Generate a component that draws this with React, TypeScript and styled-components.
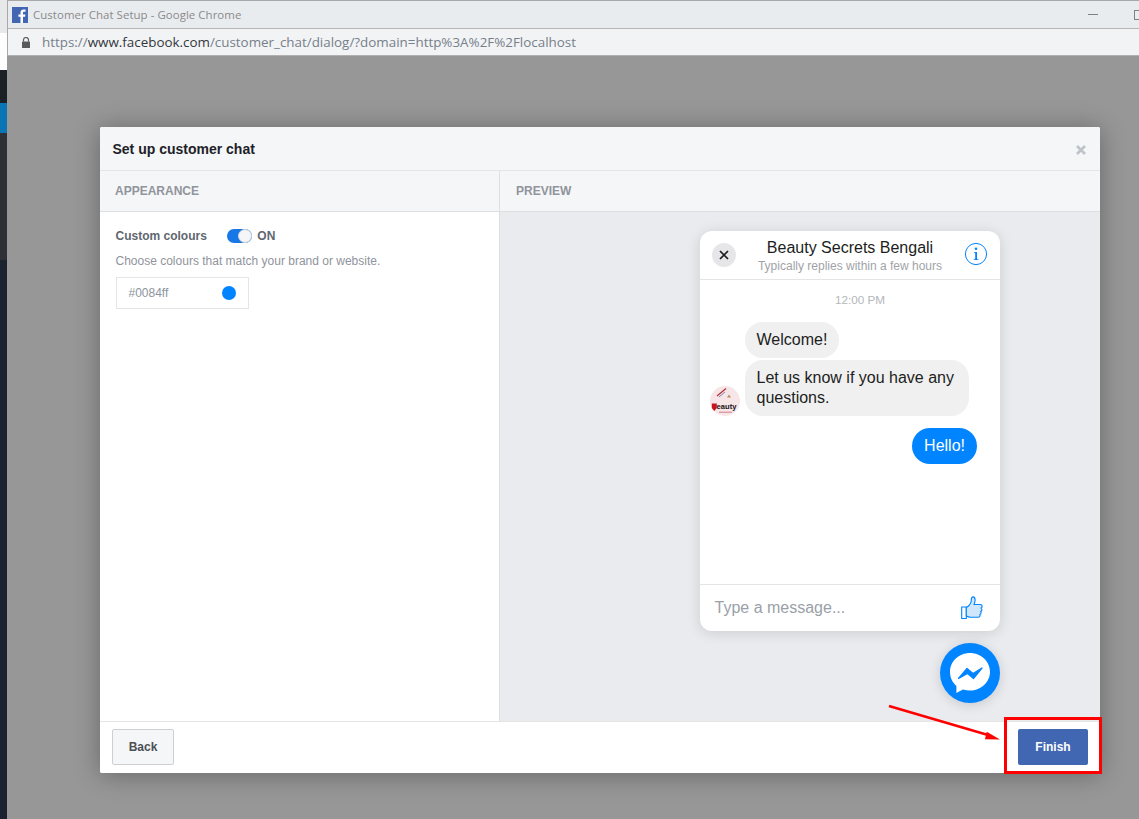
import React from "react";
import styled, { createGlobalStyle } from "styled-components";

const Global = createGlobalStyle`
  html, body { margin: 0; padding: 0; height: 100%; overflow: hidden; background: #979797; }
  #root { height: 819px; }
  * { box-sizing: border-box; }
`;

const Page = styled.div`
  position: relative;
  width: 1139px;
  height: 819px;
  display: flex;
  font-family: "Liberation Sans", Arial, sans-serif;
  overflow: hidden;
`;

const BackStrip = styled.div`
  width: 7px;
  flex: none;
  display: flex;
  flex-direction: column;
`;

const StripPart = styled.div<{ $h: number; $c: string }>`
  height: ${(p) => p.$h}px;
  background: ${(p) => p.$c};
  flex: none;
`;

const Win = styled.div`
  flex: 1;
  display: flex;
  flex-direction: column;
  min-width: 0;
`;

const TitleBar = styled.div`
  height: 29px;
  flex: none;
  display: flex;
  align-items: center;
  padding: 0 0 0 3px;
  background: #e9ecef;
  border-top: 1px solid #a8a8a8;
  border-bottom: 1px solid #b4b6b8;
  border-left: 1px solid #a8a8a8;
`;

const TitleText = styled.span`
  margin-left: 4px;
  font-size: 11.45px;
  font-family: "Open Sans", sans-serif;
  color: #8a8a8a;
  flex: 1;
  letter-spacing: 0.05px;
`;

const Controls = styled.div`
  display: flex;
  align-items: center;
  gap: 36px;
  margin-right: -5px;
`;

const MinBtn = styled.span`
  width: 10px;
  height: 1px;
  background: #808080;
`;

const MaxBtn = styled.span`
  width: 10px;
  height: 10px;
  border: 1px solid #808080;
`;

const AddressBar = styled.div`
  height: 27px;
  flex: none;
  display: flex;
  align-items: center;
  gap: 12px;
  padding-left: 14px;
  background: #f2f3f5;
  border-left: 1px solid #a8a8a8;
  border-bottom: 1px solid #b0b0b0;
`;

const Url = styled.div`
  font-size: 13.4px;
  font-family: "Open Sans", sans-serif;
  color: #76808a;
  white-space: nowrap;
`;

const UrlDark = styled.span`
  color: #33373c;
`;

const Overlay = styled.div`
  flex: 1;
  background: #979797;
  padding: 71px 39px 46px 93px;
  display: flex;
`;

const Dialog = styled.div`
  flex: 1;
  display: flex;
  flex-direction: column;
  background: #fff;
  border-radius: 2px;
  box-shadow: 0 2px 26px rgba(0, 0, 0, 0.32);
  overflow: hidden;
`;

const DialogHead = styled.div`
  height: 44px;
  flex: none;
  display: flex;
  align-items: center;
  justify-content: space-between;
  padding: 0 13px 0 12.5px;
  background: #f5f6f7;
  border-bottom: 1px solid #e5e5e5;
`;

const DialogTitle = styled.h2`
  margin: 0;
  font-size: 14px;
  font-weight: 700;
  color: #1d2129;
`;

const CloseMark = styled.svg`
  width: 12px;
  height: 12px;
  margin-top: 2px;
`;

const Columns = styled.div`
  flex: 1;
  display: flex;
  min-height: 0;
`;

const LeftCol = styled.div`
  width: 400px;
  flex: none;
  display: flex;
  flex-direction: column;
  border-right: 1px solid #dddfe2;
`;

const RightCol = styled.div`
  flex: 1;
  display: flex;
  flex-direction: column;
  background: #e9ebee;
`;

const ColHead = styled.div<{ $pad: number }>`
  height: 41px;
  flex: none;
  display: flex;
  align-items: center;
  padding-left: ${(p) => p.$pad}px;
  background: #f5f6f7;
  border-bottom: 1px solid #dddfe2;
  font-size: 12px;
  font-weight: 700;
  color: #90949c;
`;

const Settings = styled.div`
  padding: 14px 15.5px;
`;

const ToggleRow = styled.div`
  display: flex;
  align-items: center;
  height: 20px;
  font-size: 12px;
  font-weight: 700;
  color: #606770;
`;

const Toggle = styled.span`
  position: relative;
  width: 25px;
  height: 14px;
  margin-left: 20.5px;
  margin-right: 5px;
  border-radius: 7px;
  background: #1877e6;
`;

const Knob = styled.span`
  position: absolute;
  right: 0;
  top: 0;
  width: 14px;
  height: 14px;
  border-radius: 50%;
  background: #f5f6f7;
  border: 1px solid #ccd0d5;
`;

const Hint = styled.p`
  margin: 7px 0 8px;
  font-size: 12px;
  line-height: 16px;
  color: #90949c;
`;

const ColorField = styled.div`
  width: 133px;
  height: 32px;
  margin-left: 0.5px;
  display: flex;
  align-items: center;
  justify-content: space-between;
  padding: 0 12px 0 11.5px;
  border: 1px solid #e3e5e8;
  font-size: 12px;
  color: #8d949e;
`;

const Dot = styled.span`
  width: 14px;
  height: 14px;
  border-radius: 50%;
  background: #0084ff;
`;

const Preview = styled.div`
  flex: 1;
  display: flex;
  flex-direction: column;
  align-items: flex-end;
  padding: 19px 100px 0 0;
`;

const ChatCard = styled.div`
  width: 300px;
  height: 400px;
  flex: none;
  display: flex;
  flex-direction: column;
  background: #fff;
  border-radius: 12px;
  box-shadow: 0 2px 14px rgba(0, 0, 0, 0.13);
  overflow: hidden;
`;

const ChatHead = styled.div`
  height: 49px;
  flex: none;
  display: flex;
  align-items: center;
  justify-content: space-between;
  padding: 0 12px;
  border-bottom: 1px solid #e5e5e5;
`;

const CloseCircle = styled.span`
  width: 24px;
  height: 24px;
  border-radius: 50%;
  background: #e6e6e8;
  display: flex;
  align-items: center;
  justify-content: center;
`;

const ChatTitle = styled.div`
  display: flex;
  flex-direction: column;
  align-items: center;
  padding-top: 1px;
`;

const ChatName = styled.div`
  font-size: 16px;
  line-height: 19px;
  color: #1c1e21;
`;

const ChatSub = styled.div`
  margin-top: 1px;
  font-size: 12px;
  line-height: 16px;
  color: #a0a3a8;
`;

const InfoIcon = styled.svg`
  width: 24px;
  height: 24px;
  margin-top: -3px;
`;

const ChatBody = styled.div`
  flex: 1;
  display: flex;
  flex-direction: column;
  padding: 12px 23px 0 10px;
`;

const Time = styled.div`
  text-align: center;
  font-size: 11.7px;
  line-height: 16px;
  color: #b4b7bb;
  margin-left: 33px;
  margin-bottom: 14px;
`;

const Incoming = styled.div`
  display: flex;
  align-items: flex-end;
  gap: 5px;
`;

const Avatar = styled.svg`
  width: 30px;
  height: 30px;
  flex: none;
`;

const Stack = styled.div`
  display: flex;
  flex-direction: column;
  align-items: flex-start;
  gap: 2px;
`;

const Bubble = styled.div<{ $me?: boolean }>`
  padding: 8px ${(p) => (p.$me ? "12px" : "11.5px")};
  border-radius: 18px;
  font-size: 16px;
  line-height: 20px;
  background: ${(p) => (p.$me ? "#0084ff" : "#f1f0f0")};
  color: ${(p) => (p.$me ? "#fff" : "#1c1e21")};
  max-width: 224px;
`;

const Outgoing = styled.div`
  display: flex;
  justify-content: flex-end;
  margin-top: 12px;
`;

const Composer = styled.div`
  height: 47px;
  flex: none;
  display: flex;
  align-items: center;
  justify-content: space-between;
  padding: 0 17px 0 14.5px;
  border-top: 1px solid #e5e5e5;
`;

const Placeholder = styled.div`
  font-size: 16px;
  color: #9a9fa8;
`;

const Launcher = styled.div`
  width: 60px;
  height: 60px;
  flex: none;
  margin-top: 12px;
  border-radius: 50%;
  background: #0084ff;
  display: flex;
  align-items: center;
  justify-content: center;
  box-shadow: 0 2px 12px rgba(0, 0, 0, 0.15);
`;

const Footer = styled.div`
  height: 52px;
  flex: none;
  display: flex;
  align-items: center;
  justify-content: space-between;
  padding: 0 12px 2px;
  border-top: 1px solid #e5e5e5;
  background: #fff;
`;

const BackBtn = styled.button`
  width: 62px;
  height: 36px;
  padding: 0;
  border: 1px solid #ccd0d5;
  border-radius: 2px;
  background: #f5f6f7;
  font-family: inherit;
  font-size: 12px;
  font-weight: 700;
  color: #4b4f56;
`;

const FinishBtn = styled.button`
  width: 70px;
  height: 36px;
  padding: 0;
  border: none;
  border-radius: 2px;
  background: #4267b2;
  font-family: inherit;
  font-size: 12px;
  font-weight: 700;
  color: #fff;
`;

const Highlight = styled.div`
  position: absolute;
  left: 1004px;
  top: 717px;
  width: 98px;
  height: 57px;
  border: 3px solid #fe0000;
`;

const Arrow = styled.svg`
  position: absolute;
  left: 880px;
  top: 700px;
  width: 130px;
  height: 50px;
`;

export default function App() {
  return (
    <Page>
      <Global />
      <BackStrip>
        <StripPart $h={33} $c="#e7e8ea" />
        <StripPart $h={37} $c="#fdfdfd" />
        <StripPart $h={33} $c="#1b2027" />
        <StripPart $h={30} $c="#0b74b4" />
        <StripPart $h={127} $c="#2d3136" />
        <StripPart $h={559} $c="#1a2230" />
      </BackStrip>
      <Win>
        <TitleBar>
          <svg width="18" height="16" viewBox="0 0 18 16" aria-hidden="true">
            <rect x="1" y="0" width="16" height="16" fill="#4267b2" />
            <path d="M12 16V9.8h2.100l.3-2.400H12V5.900c0-.7.2-1.200 1.200-1.200h1.300V2.600c-.2 0-1-.1-1.900-.1-1.900 0-3.100 1.100-3.100 3.200v1.700H7.400v2.400h2.100V16z" fill="#fff" />
          </svg>
          <TitleText>Customer Chat Setup - Google Chrome</TitleText>
          <Controls>
            <MinBtn />
            <MaxBtn />
          </Controls>
        </TitleBar>
        <AddressBar>
          <svg width="8" height="11" viewBox="0 0 8 11" aria-hidden="true">
            <path d="M1.500 4.500V3a2.500 2.500 0 0 1 5 0v1.500" fill="none" stroke="#5a5a5a" strokeWidth="1.200" />
            <rect x="0" y="4.500" width="8" height="6.500" rx="0.500" fill="#5a5a5a" />
          </svg>
          <Url>
            https://<UrlDark>www.facebook.com</UrlDark>/customer_chat/dialog/?domain=http%3A%2F%2Flocalhost
          </Url>
        </AddressBar>
        <Overlay>
          <Dialog>
            <DialogHead>
              <DialogTitle>Set up customer chat</DialogTitle>
              <CloseMark viewBox="0 0 12 12" aria-hidden="true">
                <path d="M2 2l8 8M10 2l-8 8" stroke="#bec2c9" strokeWidth="2.600" />
              </CloseMark>
            </DialogHead>
            <Columns>
              <LeftCol>
                <ColHead $pad={15}>APPEARANCE</ColHead>
                <Settings>
                  <ToggleRow>
                    Custom colours
                    <Toggle>
                      <Knob />
                    </Toggle>
                    ON
                  </ToggleRow>
                  <Hint>Choose colours that match your brand or website.</Hint>
                  <ColorField>
                    #0084ff
                    <Dot />
                  </ColorField>
                </Settings>
              </LeftCol>
              <RightCol>
                <ColHead $pad={16}>PREVIEW</ColHead>
                <Preview>
                  <ChatCard>
                    <ChatHead>
                      <CloseCircle>
                        <svg width="10" height="10" viewBox="0 0 10 10" aria-hidden="true">
                          <path d="M1 1l8 8M9 1l-8 8" stroke="#1c1e21" strokeWidth="1.700" />
                        </svg>
                      </CloseCircle>
                      <ChatTitle>
                        <ChatName>Beauty Secrets Bengali</ChatName>
                        <ChatSub>Typically replies within a few hours</ChatSub>
                      </ChatTitle>
                      <InfoIcon viewBox="0 0 24 24" aria-hidden="true">
                        <circle cx="12" cy="12" r="10.600" fill="none" stroke="#0084ff" strokeWidth="1" />
                        <circle cx="12" cy="6.800" r="1.300" fill="#0084ff" />
                        <path d="M10 10h3v7.200h1.400v.8H9.800v-.8h1.400v-6.400H10z" fill="#0084ff" />
                      </InfoIcon>
                    </ChatHead>
                    <ChatBody>
                      <Time>12:00 PM</Time>
                      <Incoming>
                        <Avatar viewBox="0 0 30 30" aria-hidden="true">
                          <circle cx="15" cy="15" r="15" fill="#f6e6e8" />
                          <path d="M7 10l9-7.500" stroke="#b8323a" strokeWidth="1.300" />
                          <path d="M9 11l6-5" stroke="#5f6f9a" strokeWidth="0.800" />
                          <path d="M17 11.500l2-3 2 3z" fill="#b78d62" />
                          <path d="M1.800 17.500h5v4.500l-2.500 3-2.500-3z" fill="#c4161c" />
                          <text x="6.600" y="23" fontFamily="Liberation Sans, sans-serif" fontSize="7.600" fontWeight="700" fill="#1a1414">
                            eauty
                          </text>
                          <path d="M9 26.200h13" stroke="#cf7f86" strokeWidth="1" />
                        </Avatar>
                        <Stack>
                          <Bubble>Welcome!</Bubble>
                          <Bubble>Let us know if you have any questions.</Bubble>
                        </Stack>
                      </Incoming>
                      <Outgoing>
                        <Bubble $me>Hello!</Bubble>
                      </Outgoing>
                    </ChatBody>
                    <Composer>
                      <Placeholder>Type a message...</Placeholder>
                      <svg width="22" height="24" viewBox="0 0 22 24" aria-hidden="true">
                        <path d="M.7 11h4.600v11.500H.7z" fill="#fff" stroke="#0084ff" strokeWidth="1.100" />
                        <path d="M5.300 11.500c2.500-1.500 5-4.500 5-7.600 0-2 .7-3 1.800-3 1.300 0 2 1.300 2 3.200 0 1.600-.4 3-1 4.400h6c1.200 0 2 .8 2 1.900 0 .8-.4 1.400-1 1.700.5.4.8 1 .8 1.600 0 .8-.5 1.500-1.200 1.800.3.400.4.8.4 1.300 0 .8-.5 1.400-1.200 1.700.2.300.2.600.2.900 0 1-.8 1.800-2 1.800H9.500c-1.600 0-2.800-.5-4.200-1.200z" fill="#cfe6fb" stroke="#0084ff" strokeWidth="1.100" />
                      </svg>
                    </Composer>
                  </ChatCard>
                  <Launcher>
                    <svg width="40" height="40" viewBox="0 0 40 40" aria-hidden="true">
                      <path d="M20 0C9 0 0 8.300 0 19c0 5.600 2.400 10.500 6.400 13.900V40l6.500-3.400c2.200.6 4.600 1 7.100 1 11 0 20-8.300 20-18.800S31 0 20 0z" fill="#fff" />
                      <path d="M8.500 25.500l8.500-10 6 5 9-5.500-8.500 10.500-6-5z" fill="#0084ff" stroke="#0084ff" strokeWidth="1.200" strokeLinejoin="round" />
                    </svg>
                  </Launcher>
                </Preview>
              </RightCol>
            </Columns>
            <Footer>
              <BackBtn>Back</BackBtn>
              <FinishBtn>Finish</FinishBtn>
            </Footer>
          </Dialog>
        </Overlay>
      </Win>
      <Arrow viewBox="0 0 130 50" aria-hidden="true">
        <path d="M9 6L108 35" stroke="#fe0000" strokeWidth="2.600" fill="none" />
        <path d="M120 39.500L106.700 31.700L105 39.300z" fill="#fe0000" />
      </Arrow>
      <Highlight />
    </Page>
  );
}
